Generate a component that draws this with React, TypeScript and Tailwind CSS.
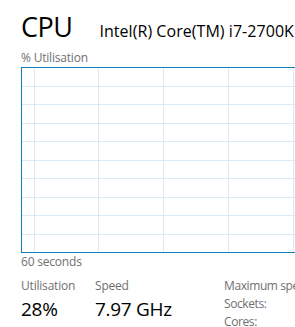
const font = { fontFamily: '"Open Sans", "Noto Sans", sans-serif' };

function Grid() {
  const rows = Array.from({ length: 9 }, (_, i) => Math.round(18.55 * (i + 1)) - 0.5);
  const cols = [13, 77, 142, 207, 272].map((x) => x - 0.5);
  return (
    <svg width="300" height="184" className="block">
      {rows.map((y) => (
        <line key={y} x1="0" x2="300" y1={y} y2={y} stroke="#d9eaf4" strokeWidth="1" />
      ))}
      {cols.map((x) => (
        <line key={x} x1={x} x2={x} y1="0" y2="184" stroke="#d9eaf4" strokeWidth="1" />
      ))}
    </svg>
  );
}

export default function App() {
  return (
    <div
      className="w-[295px] h-[327px] overflow-hidden bg-white pl-[21px] text-black"
      style={font}
    >
      <div className="flex w-[400px] items-baseline pt-[13px] whitespace-nowrap">
        <span className="shrink-0 text-[27px] leading-[27px] tracking-[-0.5px]">CPU</span>
        <span className="ml-[27px] shrink-0 text-[16px] leading-[16px] tracking-[0.05px]">
          Intel(R) Core(TM) i7-2700K CPU @ 3.50GHz
        </span>
      </div>

      <div className="mt-[11px] text-[12px] leading-[14px] text-[#707070] tracking-[-0.2px]">
        % Utilisation
      </div>

      <div className="mt-[2px] h-[186px] w-[300px] border border-r-0 border-[#117dbb]">
        <Grid />
      </div>

      <div className="mt-[2px] text-[12px] leading-[14px] text-[#707070] tracking-[-0.2px]">
        60 seconds
      </div>

      <div className="mt-[10px] flex w-[400px] whitespace-nowrap">
        <div className="w-[74px] shrink-0">
          <div className="text-[12px] leading-[14px] text-[#707070] tracking-[-0.2px]">
            Utilisation
          </div>
          <div className="mt-[5px] text-[19px] leading-[22px] tracking-[-0.3px]">28%</div>
        </div>
        <div className="w-[129px] shrink-0">
          <div className="text-[12px] leading-[14px] text-[#707070] tracking-[-0.2px]">
            Speed
          </div>
          <div className="mt-[5px] text-[19px] leading-[22px] tracking-[-0.3px]">7.97 GHz</div>
        </div>
        <div className="shrink-0 text-[12px] leading-[18px] text-[#707070] tracking-[-0.4px] -mt-[2px]">
          <div>Maximum speed:</div>
          <div>Sockets:</div>
          <div>Cores:</div>
        </div>
      </div>
    </div>
  );
}
